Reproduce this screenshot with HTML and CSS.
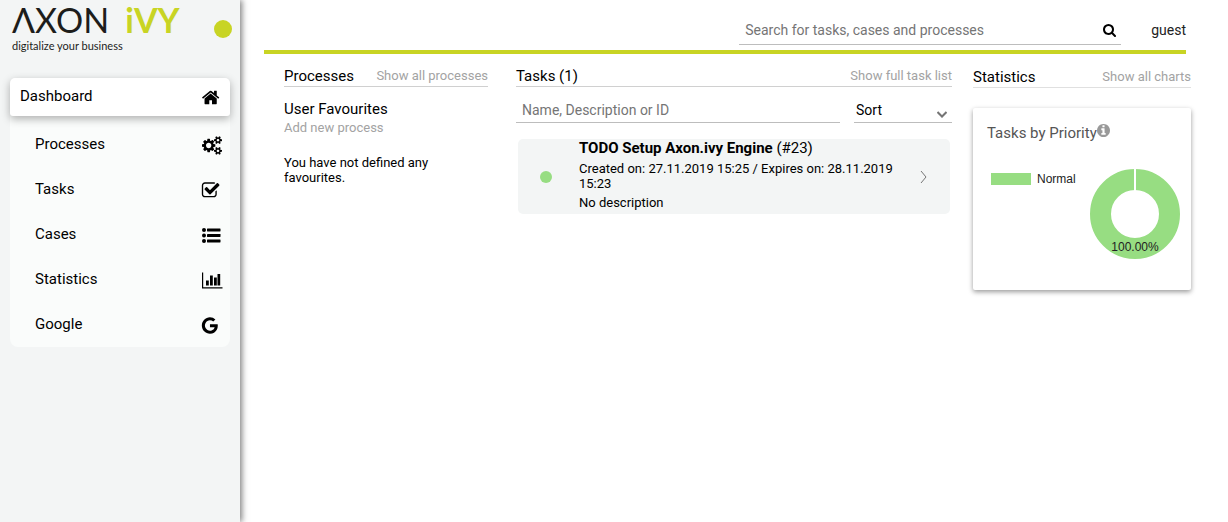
FILE: index.html
```html
<!DOCTYPE html>
<html lang="en">
<head>
<meta charset="utf-8">
<title>Axon.ivy Portal</title>
<link rel="stylesheet" href="styles.css">
</head>
<body>
<div class="layout">
  <aside class="sidebar">
    <div class="brand-row">
      <a class="brand" href="#">
        <span class="brand-name"><span>ΛXON</span><b>iVY</b></span>
        <span class="brand-tagline">digitalize your business</span>
      </a>
      <button class="menu-toggle" type="button" aria-label="Toggle menu"></button>
    </div>
    <nav class="menu">
      <a class="menu-item menu-item-active" href="#">Dashboard
        <svg class="menu-icon" viewBox="128 0 1792 1792"><path d="M1472 992v480q0 26-19 45t-45 19h-384v-384h-256v384h-384q-26 0-45-19t-19-45v-480q0-1 .5-3t.5-3l575-474 575 474q1 2 1 6zm223-69l-62 74q-8 9-21 11h-3q-13 0-21-7l-692-577-692 577q-12 8-24 7-13-2-21-11l-62-74q-8-10-7-23.500t11-21.500l719-599q32-26 76-26t76 26l244 204v-195q0-14 9-23t23-9h192q14 0 23 9t9 23v408l219 182q10 8 11 21.500t-7 23.500z"/></svg>
      </a>
      <div class="submenu">
        <a class="menu-item" href="#">Processes
          <svg class="menu-icon" viewBox="-64 0 1920 1792"><path d="M832 896q0-106-75-181t-181-75-181 75-75 181 75 181 181 75 181-75 75-181zm768 512q0-52-38-90t-90-38-90 38-38 90q0 53 37.500 90.500t90.500 37.500 90.500-37.500 37.500-90.500zm0-1024q0-52-38-90t-90-38-90 38-38 90q0 53 37.500 90.500t90.500 37.500 90.500-37.500 37.500-90.500zm-384 421v185q0 10-7 19.500t-16 10.500l-155 24q-11 35-32 76 34 48 90 115 7 11 7 20 0 12-7 19-23 30-82.500 89.500t-78.500 59.500q-11 0-21-7l-115-90q-37 19-77 31-11 108-23 155-7 24-30 24h-186q-11 0-20-7.500t-10-17.500l-23-153q-34-10-75-31l-118 89q-7 7-20 7-11 0-21-8-144-133-144-160 0-9 7-19 10-14 41-53t47-61q-23-44-35-82l-152-24q-10-1-17-9.500t-7-19.500v-185q0-10 7-19.500t16-10.500l155-24q11-35 32-76-34-48-90-115-7-11-7-20 0-12 7-20 22-30 82-89t79-59q11 0 21 7l115 90q34-18 77-32 11-108 23-154 7-24 30-24h186q11 0 20 7.500t10 17.500l23 153q34 10 75 31l118-89q8-7 20-7 11 0 21 8 144 133 144 160 0 8-7 19-12 16-42 54t-45 60q23 48 34 82l152 23q10 2 17 10.500t7 19.500zm640 533v140q0 16-149 31-12 27-30 52 51 113 51 138 0 4-4 7-122 71-124 71-8 0-46-47t-52-68q-20 2-30 2t-30-2q-14 21-52 68t-46 47q-2 0-124-71-4-3-4-7 0-25 51-138-18-25-30-52-149-15-149-31v-140q0-16 149-31 13-29 30-52-51-113-51-138 0-4 4-7 4-2 35-20t59-34 30-16q8 0 46 46.500t52 67.500q20-2 30-2t30 2q51-71 92-112l6-2q4 0 124 70 4 3 4 7 0 25-51 138 17 23 30 52 149 15 149 31zm0-1024v140q0 16-149 31-12 27-30 52 51 113 51 138 0 4-4 7-122 71-124 71-8 0-46-47t-52-68q-20 2-30 2t-30-2q-14 21-52 68t-46 47q-2 0-124-71-4-3-4-7 0-25 51-138-18-25-30-52-149-15-149-31v-140q0-16 149-31 13-29 30-52-51-113-51-138 0-4 4-7 4-2 35-20t59-34 30-16q8 0 46 46.500t52 67.500q20-2 30-2t30 2q51-71 92-112l6-2q4 0 124 70 4 3 4 7 0 25-51 138 17 23 30 52 149 15 149 31z"/></svg>
        </a>
        <a class="menu-item" href="#">Tasks
          <svg class="menu-icon" viewBox="128 0 1792 1792"><path d="M1472 930v318q0 119-84.500 203.500t-203.500 84.500h-832q-119 0-203.500-84.500t-84.500-203.500v-832q0-119 84.500-203.500t203.500-84.500h832q63 0 117 25 15 7 18 23 3 17-9 29l-49 49q-10 10-23 10-3 0-9-2-23-6-45-6h-832q-66 0-113 47t-47 113v832q0 66 47 113t113 47h832q66 0 113-47t47-113v-254q0-13 9-22l64-64q10-10 23-10 6 0 12 3 20 8 20 29zm231-489l-814 814q-24 24-57 24t-57-24l-430-430q-24-24-24-57t24-57l110-110q24-24 57-24t57 24l263 263 647-647q24-24 57-24t57 24l110 110q24 24 24 57t-24 57z"/></svg>
        </a>
        <a class="menu-item" href="#">Cases
          <svg class="menu-icon" viewBox="0 0 20 18"><circle cx="2" cy="3.500" r="2"/><circle cx="2" cy="9" r="2"/><circle cx="2" cy="14.500" r="2"/><rect x="5" y="2" width="13.500" height="3" rx=".4"/><rect x="5" y="7.500" width="13.500" height="3" rx=".4"/><rect x="5" y="13" width="13.500" height="3" rx=".4"/></svg>
        </a>
        <a class="menu-item" href="#">Statistics
          <svg class="menu-icon" viewBox="0 0 20 18"><path d="M0 1h1.200v14.800H20.500V17H0zM4 9h2.800v5H4zM8 4h2.800v10H8zM12 6h2.800v8H12zM15.500 2.500H18.200V14h-2.700z"/></svg>
        </a>
        <a class="menu-item" href="#">Google
          <svg class="menu-icon" viewBox="192 0 1792 1792"><path d="M896 786h725q12 67 12 128 0 217-91 387.500t-259.500 266.500-386.500 96q-157 0-299-60.500t-245-163.500-163.500-245-60.500-299 60.500-299 163.500-245 245-163.500 299-60.500q300 0 515 201l-209 201q-123-119-306-119-129 0-238.500 65t-173.500 176.500-64 243.500 64 243.500 173.500 176.500 238.500 65q87 0 160-24t120-60 82-82 51.500-87 22.500-78h-436v-264z"/></svg>
        </a>
      </div>
    </nav>
  </aside>

  <div class="page">
    <header class="topbar">
      <form class="search" role="search">
        <input class="search-input" type="text" aria-label="Search" placeholder="Search for tasks, cases and processes">
        <button class="search-button" type="button" aria-label="Start search">
          <svg class="search-icon" viewBox="64 128 1664 1664"><path d="M1216 832q0-185-131.500-316.500t-316.500-131.500-316.500 131.500-131.500 316.500 131.500 316.500 316.500 131.500 316.500-131.500 131.500-316.500zm512 832q0 52-38 90t-90 38q-54 0-90-38l-343-342q-179 124-399 124-143 0-273.500-55.500t-225-150-150-225-55.500-273.500 55.500-273.500 150-225 225-150 273.500-55.500 273.500 55.500 225 150 150 225 55.500 273.500q0 220-124 399l343 343q37 37 37 90z"/></svg>
        </button>
      </form>
      <a class="user" href="#">guest</a>
    </header>

    <main class="columns">
      <section class="processes">
        <div class="section-head">
          <h2 class="title">Processes</h2>
          <a class="more" href="#">Show all processes</a>
        </div>
        <h3 class="title favourites-title">User Favourites</h3>
        <a class="more" href="#">Add new process</a>
        <p class="empty-note">You have not defined any favourites.</p>
      </section>

      <section class="tasks">
        <div class="section-head">
          <h2 class="title">Tasks (1)</h2>
          <a class="more" href="#">Show full task list</a>
        </div>
        <div class="filters">
          <input class="filter-input" type="text" aria-label="Filter tasks" placeholder="Name, Description or ID">
          <div class="sort">
            <select class="sort-select" aria-label="Sort"><option>Sort</option></select>
            <svg class="sort-arrow" viewBox="0 0 10 7"><path d="M.500 1l4.500 4.500L9.500 1"/></svg>
          </div>
        </div>
        <article class="task">
          <span class="task-dot"></span>
          <div class="task-body">
            <h3 class="task-name"><b>TODO Setup Axon.ivy Engine</b> (#23)</h3>
            <p class="task-dates">Created on: 27.11.2019 15:25 / Expires on: 28.11.2019 15:23</p>
            <p class="task-text">No description</p>
          </div>
          <a class="task-open" href="#" aria-label="Open task">
            <svg class="task-arrow" viewBox="0 0 8 14"><path d="M1 1l5 6-5 6"/></svg>
          </a>
        </article>
      </section>

      <section class="statistics">
        <div class="section-head section-head-light">
          <h2 class="title">Statistics</h2>
          <a class="more" href="#">Show all charts</a>
        </div>
        <div class="chart-card">
          <div class="chart-head">
            <h3 class="chart-title">Tasks by Priority</h3>
            <svg class="info-icon" viewBox="128 128 1536 1536"><path d="M1152 1376v-160q0-14-9-23t-23-9h-96v-512q0-14-9-23t-23-9h-320q-14 0-23 9t-9 23v160q0 14 9 23t23 9h96v320h-96q-14 0-23 9t-9 23v160q0 14 9 23t23 9h448q14 0 23-9t9-23zm-128-896v-160q0-14-9-23t-23-9h-192q-14 0-23 9t-9 23v160q0 14 9 23t23 9h192q14 0 23-9t9-23zm640 416q0 209-103 385.500t-279.500 279.500-385.500 103-385.500-103-279.500-279.500-103-385.500 103-385.500 279.500-279.500 385.500-103 385.500 103 279.500 279.500 103 385.500z"/></svg>
          </div>
          <div class="chart">
            <div class="legend"><span class="legend-swatch"></span>Normal</div>
            <svg class="donut" viewBox="0 0 90 90" role="img" aria-label="Normal 100.00%">
              <circle class="donut-ring" cx="45" cy="45" r="34.500"/>
              <path class="donut-gap" d="M45 0v22"/>
              <text class="donut-label" x="45" y="82">100.00%</text>
            </svg>
          </div>
        </div>
      </section>
    </main>
  </div>
</div>
</body>
</html>
```
FILE: styles.css
```css
* { box-sizing: border-box; }

body {
  margin: 0;
  background: #fff;
  color: #000;
  font-family: Roboto, sans-serif;
  font-size: 15px;
  line-height: 18px;
}

a { color: inherit; text-decoration: none; }
h2, h3, p { margin: 0; font-weight: 400; }
button { padding: 0; border: 0; background: none; cursor: pointer; }
input, select { border: 0; border-radius: 0; background: none; font: inherit; outline: 0; }

.layout { display: flex; min-height: 100vh; }

.sidebar {
  flex: 0 0 240px;
  padding: 0 10px;
  background: #f3f5f5;
  box-shadow: 2px 0 6px rgba(0, 0, 0, .5);
}

.brand-row { display: flex; justify-content: space-between; height: 78px; }
.brand {
  display: flex;
  flex-direction: column;
  padding-left: 2px;
  font-family: Lato, "Open Sans", sans-serif;
  color: #1d1d1b;
}
.brand-name {
  display: flex;
  gap: 16px;
  font-size: 34px;
  line-height: 40px;
  white-space: nowrap;
}
.brand-name b { color: #c8d424; }
.brand-tagline { font-size: 11px; line-height: 12px; }
.menu-toggle {
  width: 18px;
  height: 18px;
  margin: 20px -2px 0 0;
  border-radius: 50%;
  background: #c8d424;
}

.menu { border-radius: 8px; background: #fafcfb; }
.menu-item {
  display: flex;
  align-items: center;
  justify-content: space-between;
  height: 45px;
  padding: 0 8px 2px 25px;
}
.menu-item-active {
  height: 38px;
  padding-left: 10px;
  border-radius: 5px 5px 3px 3px;
  background: #fff;
  box-shadow: 0 3px 8px rgba(0, 0, 0, .3);
}
.submenu { padding-top: 6px; }
.menu-icon { width: 20px; height: 19px; margin-top: 3px; overflow: visible; }

.page { flex: 1; min-width: 0; }

.topbar {
  display: flex;
  align-items: flex-end;
  justify-content: flex-end;
  height: 54px;
  margin: 0 42px 0 24px;
  padding-bottom: 5px;
  border-bottom: 4px solid #c8d424;
  font-size: 14px;
}
.search {
  display: flex;
  align-items: center;
  width: 382px;
  height: 29px;
  border-bottom: 1px solid #bdbdbd;
}
.search-input { flex: 1; min-width: 0; padding: 0 6px; }
.search-input::placeholder, .filter-input::placeholder { color: #757575; opacity: 1; }
.search-button { display: flex; padding-right: 5px; }
.search-icon { width: 13px; height: 13px; }
.user { padding: 0 0 6px 30px; color: #222; }

.columns {
  display: grid;
  grid-template-columns: 204fr 443fr 218fr;
  gap: 21px;
  padding: 13px 37px 20px 44px;
}
.tasks { padding-left: 7px; }

.section-head {
  display: flex;
  align-items: center;
  justify-content: space-between;
  height: 20px;
  padding-bottom: 1px;
  border-bottom: 1px solid #d0d0d0;
}
.section-head-light { height: 21px; border-color: #e0e0e0; }
.title { font-size: 15px; line-height: 18px; }
.more { color: #a3a3a3; font-size: 13px; line-height: 18px; white-space: nowrap; }

.favourites-title { margin-top: 13px; }
.empty-note { max-width: 160px; margin-top: 18px; font-size: 13px; line-height: 15px; }

.filters { display: flex; gap: 14px; font-size: 14px; }
.filter-input {
  flex: 1;
  min-width: 0;
  height: 36px;
  padding: 10px 6px 0;
  border-bottom: 1px solid #bdbdbd;
}
.sort { position: relative; width: 98px; }
.sort-select {
  width: 100%;
  height: 36px;
  padding: 10px 2px 0;
  border-bottom: 1px solid #bdbdbd;
  appearance: none;
}
.sort-arrow {
  position: absolute;
  right: 5px;
  bottom: 5px;
  width: 10px;
  height: 7px;
  fill: none;
  stroke: #757575;
  stroke-width: 2;
  pointer-events: none;
}

.task {
  display: flex;
  align-items: center;
  margin: 16px 2px 0;
  border-radius: 5px;
  background: #f3f5f5;
}
.task-dot {
  flex: none;
  width: 12px;
  height: 12px;
  margin: 0 27px 0 22px;
  border-radius: 50%;
  background: #97dd82;
}
.task-body { flex: 1; padding-bottom: 4px; font-size: 13px; line-height: 15px; }
.task-name { font-size: 15px; line-height: 18px; }
.task-dates { margin: 4px 0; }
.task-open { display: flex; padding: 0 22px; }
.task-arrow { width: 8px; height: 14px; fill: none; stroke: #757575; }

.chart-card {
  height: 182px;
  margin-top: 20px;
  padding: 16px 11px 0 14px;
  border-radius: 2px;
  box-shadow: 0 2px 5px rgba(0, 0, 0, .4);
}
.chart-head { display: flex; }
.chart-title { color: #555; font-size: 15px; line-height: 18px; white-space: nowrap; }
.info-icon { width: 13px; height: 13px; fill: #999; }
.chart {
  display: flex;
  justify-content: space-between;
  margin-top: 27px;
  padding-left: 4px;
  font-family: "Liberation Sans", sans-serif;
  font-size: 12px;
}
.legend { display: flex; align-items: center; gap: 6px; height: 20px; color: #222; }
.legend-swatch { width: 40px; height: 12px; background: #97dd82; }
.donut { flex: none; width: 90px; height: 90px; }
.donut-ring { fill: none; stroke: #97dd82; stroke-width: 21; }
.donut-gap { stroke: #fff; stroke-width: 2; }
.donut-label { fill: #222; text-anchor: middle; }
```
